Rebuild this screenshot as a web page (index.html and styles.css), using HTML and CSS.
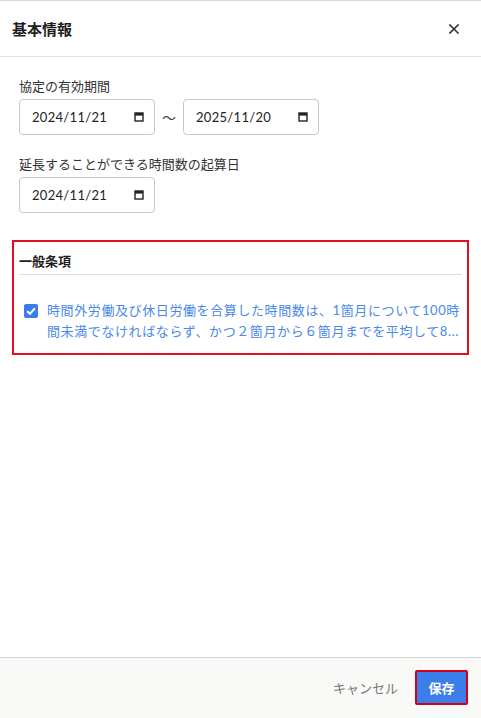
FILE: index.html
```html
<!DOCTYPE html>
<html lang="ja">
<head>
<meta charset="utf-8">
<title>基本情報</title>
<link rel="stylesheet" href="styles.css">
</head>
<body>
<div class="modal">
  <header class="modal-header">
    <h1 class="modal-title">基本情報</h1>
    <button class="close-btn" aria-label="閉じる">
      <svg width="10" height="10" viewBox="0 0 10 10"><path d="M1 1L9 9M9 1L1 9" stroke="#333" stroke-width="1.6" stroke-linecap="square"/></svg>
    </button>
  </header>
  <main class="modal-body">
    <div class="field">
      <div class="field-label">協定の有効期間</div>
      <div class="range">
        <div class="date-input"><span class="date-text">2024/11/21</span>
          <svg class="cal" width="10" height="10" viewBox="0 0 10 10"><rect x="1" y="1" width="8" height="8" fill="none" stroke="#222" stroke-width="1.4"/><rect x="1" y="1" width="8" height="2.6" fill="#222"/></svg>
        </div>
        <span class="tilde">～</span>
        <div class="date-input"><span class="date-text">2025/11/20</span>
          <svg class="cal" width="10" height="10" viewBox="0 0 10 10"><rect x="1" y="1" width="8" height="8" fill="none" stroke="#222" stroke-width="1.4"/><rect x="1" y="1" width="8" height="2.6" fill="#222"/></svg>
        </div>
      </div>
    </div>
    <div class="field">
      <div class="field-label">延長することができる時間数の起算日</div>
      <div class="range">
        <div class="date-input"><span class="date-text">2024/11/21</span>
          <svg class="cal" width="10" height="10" viewBox="0 0 10 10"><rect x="1" y="1" width="8" height="8" fill="none" stroke="#222" stroke-width="1.4"/><rect x="1" y="1" width="8" height="2.6" fill="#222"/></svg>
        </div>
      </div>
    </div>
    <section class="terms">
      <h2 class="terms-title">一般条項</h2>
      <div class="term-row">
        <svg class="checkbox" width="14" height="14" viewBox="0 0 14 14"><rect x="0" y="0" width="14" height="14" rx="2" fill="#3b7de9"/><path d="M3.2 7.2L5.9 9.8L10.9 4.4" fill="none" stroke="#fff" stroke-width="2"/></svg>
        <p class="term-text">時間外労働及び休日労働を合算した時間数は、1箇月について100時間未満でなければならず、かつ２箇月から６箇月までを平均して8...</p>
      </div>
    </section>
  </main>
  <footer class="modal-footer">
    <button class="btn-cancel">キャンセル</button>
    <button class="btn-save">保存</button>
  </footer>
</div>
</body>
</html>
```
FILE: styles.css
```css
* { box-sizing: border-box; }
html, body { margin: 0; padding: 0; height: 100%; }
body {
  font-family: "Lato", "Noto Sans CJK JP", sans-serif;
  color: #333;
  background: #fff;
}
.modal {
  height: 718px;
  display: flex;
  flex-direction: column;
  border-top: 1px solid #d9d9d9;
}
.modal-header {
  height: 56px;
  flex: none;
  display: flex;
  align-items: center;
  justify-content: space-between;
  padding: 0 17px 0 12px;
  border-bottom: 1px solid #e2e2e2;
}
.modal-title {
  margin: 0;
  font-size: 15px;
  font-weight: 700;
  color: #1e1e1e;
  line-height: 20px;
}
.close-btn {
  border: none;
  background: none;
  padding: 5px;
  display: flex;
  cursor: pointer;
}
.modal-body {
  flex: 1;
  padding: 19px 12px 0 12px;
}
.field { padding-left: 7px; margin-bottom: 19px; }
.field-label {
  font-size: 13px;
  line-height: 20px;
  color: #333;
  margin-bottom: 3px;
}
.range { display: flex; align-items: center; }
.date-input {
  width: 136px;
  height: 36px;
  border: 1px solid #c9c9c9;
  border-radius: 4px;
  display: flex;
  align-items: center;
  justify-content: space-between;
  padding: 0 10px 0 12px;
  background: #fff;
}
.date-text {
  font-size: 13px;
  letter-spacing: 0.3px;
  color: #222;
}
.tilde {
  width: 28px;
  text-align: center;
  font-size: 14px;
  color: #444;
}
.terms {
  margin-top: 27px;
  border: 2px solid #e0101e;
  padding: 9px 5px 11px 5px;
}
.terms-title {
  margin: 0 0 3px 0;
  font-size: 13px;
  font-weight: 700;
  line-height: 20px;
  color: #1e1e1e;
  border-bottom: 1px solid #dedede;
  height: 24px;
}
.term-row {
  display: flex;
  align-items: flex-start;
  padding: 22px 0 0 5px;
}
.checkbox { flex: none; margin-top: 4px; margin-right: 9px; }
.term-text {
  margin: 0;
  font-size: 13px;
  line-height: 21px;
  letter-spacing: 0.6px;
  color: #4a88ea;
}
.modal-footer {
  flex: none;
  height: 61px;
  border-top: 1px solid #d6d6d6;
  background: #f9f9f8;
  display: flex;
  align-items: flex-start;
  justify-content: flex-end;
  padding: 12px 13px 0 0;
  gap: 17px;
}
.btn-cancel {
  border: none;
  background: none;
  font-family: inherit;
  font-size: 13px;
  color: #777;
  height: 35px;
  padding: 0;
}
.btn-save {
  width: 53px;
  height: 35px;
  border: 2px solid #d4001a;
  border-radius: 2px;
  background: #3b7de9;
  color: #fff;
  font-family: inherit;
  font-weight: 700;
  font-size: 13px;
  padding: 0;
}
```
